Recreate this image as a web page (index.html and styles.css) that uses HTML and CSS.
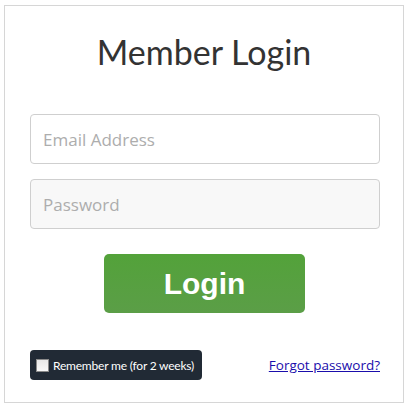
FILE: index.html
```html
<!DOCTYPE html>
<html>
<head>
<meta charset="utf-8">
<link rel="stylesheet" href="styles.css">
</head>
<body>
<div class="card">
  <h1 class="title">Member Login</h1>
  <form class="form">
    <input class="field field-email" type="text" placeholder="Email Address">
    <input class="field field-pass" type="password" placeholder="Password">
    <button class="btn" type="button">Login</button>
    <div class="bottom">
      <label class="remember"><span class="check"></span>Remember me (for 2 weeks)</label>
      <a class="forgot" href="#">Forgot password?</a>
    </div>
  </form>
</div>
</body>
</html>
```
FILE: styles.css
```css
html, body {
  margin: 0;
  padding: 0;
  background: #fff;
}
body {
  padding: 5px 0 0 4px;
}
.card {
  box-sizing: border-box;
  width: 400px;
  height: 398px;
  border: 1px solid #d6d6d6;
  background: #fff;
}
.title {
  margin: 24px 0 0 0;
  font-family: Lato, sans-serif;
  font-weight: 400;
  font-size: 34px;
  line-height: 43px;
  color: #333;
  text-align: center;
}
.form {
  display: flex;
  flex-direction: column;
  padding: 0 0 0 25px;
  margin-top: 41px;
}
.field {
  box-sizing: border-box;
  width: 350px;
  height: 50px;
  border: 1px solid #cfcfcf;
  border-radius: 4px;
  background: #fff;
  padding: 0 12px;
  font-family: "Open Sans", sans-serif;
  font-size: 17px;
  color: #333;
  outline: none;
}
.field::placeholder {
  color: #adadad;
}
.field-pass {
  margin-top: 15px;
  background: #f8f8f8;
}
.btn {
  align-self: flex-start;
  margin: 25px 0 0 74px;
  width: 201px;
  height: 59px;
  border: none;
  border-radius: 5px;
  background: linear-gradient(#53a23a, #5b9e47);
  color: #fff;
  font-family: "Liberation Sans", Arial, sans-serif;
  font-weight: 700;
  font-size: 30px;
  padding: 0;
}
.bottom {
  display: flex;
  justify-content: space-between;
  align-items: center;
  width: 350px;
  margin-top: 37px;
}
.remember {
  display: flex;
  align-items: center;
  box-sizing: border-box;
  height: 30px;
  width: 172px;
  padding: 0 6px;
  background: #212a35;
  border-radius: 4px;
  color: #fff;
  font-family: Lato, sans-serif;
  font-size: 12px;
  letter-spacing: -0.2px;
  white-space: nowrap;
}
.check {
  box-sizing: border-box;
  width: 13px;
  height: 13px;
  margin-right: 4px;
  border: 1px solid #8a8a8a;
  background: linear-gradient(#e8e8e8, #f8f8f8);
  flex: none;
}
.forgot {
  font-family: "Open Sans", sans-serif;
  font-size: 13.5px;
  color: #1a0dab;
  text-decoration: underline;
}
```
